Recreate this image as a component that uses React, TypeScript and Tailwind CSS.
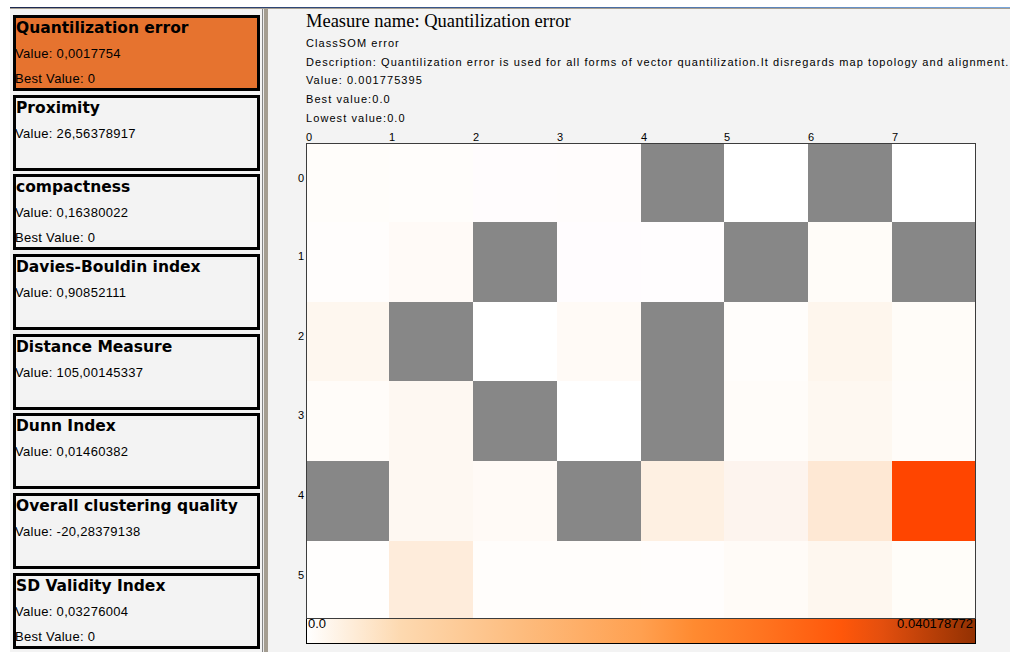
import React from 'react';

type Card = { title: string; value: string; best?: boolean; active?: boolean };

const cards: Card[] = [
  { title: 'Quantilization error', value: '0,0017754', best: true, active: true },
  { title: 'Proximity', value: '26,56378917' },
  { title: 'compactness', value: '0,16380022', best: true },
  { title: 'Davies-Bouldin index', value: '0,90852111' },
  { title: 'Distance Measure', value: '105,00145337' },
  { title: 'Dunn Index', value: '0,01460382' },
  { title: 'Overall clustering quality', value: '-20,28379138' },
  { title: 'SD Validity Index', value: '0,03276004', best: true },
];

const G = 'bg-[#878787]';
const cells: string[][] = [
  ['bg-[#fffdfa]', 'bg-[#fffdfb]', 'bg-[#fffcfd]', 'bg-[#fffcfc]', G, 'bg-[#ffffff]', G, 'bg-[#ffffff]'],
  ['bg-[#fffdfc]', 'bg-[#fffaf7]', G, 'bg-[#fffcfe]', 'bg-[#fffdfe]', G, 'bg-[#fffcf8]', G],
  ['bg-[#fef7ef]', G, 'bg-[#ffffff]', 'bg-[#fffaf6]', G, 'bg-[#fffdfb]', 'bg-[#fef6ed]', 'bg-[#fffcf8]'],
  ['bg-[#fffcf9]', 'bg-[#fef8f2]', G, 'bg-[#ffffff]', G, 'bg-[#fffcf9]', 'bg-[#fef8f1]', 'bg-[#fffcf9]'],
  [G, 'bg-[#fef8f2]', 'bg-[#fffaf6]', G, 'bg-[#fef0e2]', 'bg-[#fdf4ee]', 'bg-[#fee8d4]', 'bg-[#ff4500]'],
  ['bg-[#fffefd]', 'bg-[#feecdb]', 'bg-[#fffdfb]', 'bg-[#fffdfb]', 'bg-[#fffdfc]', 'bg-[#fffbf7]', 'bg-[#fef7ef]', 'bg-[#fffdf9]'],
];

function MeasureCard({ card }: { card: Card }) {
  return (
    <div
      className={
        card.active
          ? 'h-[76px] w-[247px] shrink-0 border-[3px] border-black bg-[#e6732f]'
          : 'h-[76px] w-[247px] shrink-0 border-[3px] border-black bg-[#f3f3f3]'
      }
    >
      <div className="h-full overflow-hidden pt-px text-black">
        <div className="whitespace-nowrap font-['DejaVu_Sans',sans-serif] text-[15.5px] font-bold leading-[18px]">
          {card.title}
        </div>
        <div className="-ml-px mt-[4px] whitespace-nowrap font-['Liberation_Sans',sans-serif] text-[13px] leading-[25px] tracking-[0.3px]">
          Value: {card.value}
        </div>
        {card.best && (
          <div className="-ml-px whitespace-nowrap font-['Liberation_Sans',sans-serif] text-[13px] leading-[25px] tracking-[0.3px]">
            Best Value: 0
          </div>
        )}
      </div>
    </div>
  );
}

export default function App() {
  const small = "font-['Liberation_Sans',sans-serif] text-[11px] leading-[18.7px] tracking-[1.07px] whitespace-nowrap";
  return (
    <div className="flex h-[660px] w-[1014px] flex-col overflow-hidden bg-white pb-[8px] pl-[10px] pr-[4px] pt-[7px]">
      <div className="h-px shrink-0 bg-[linear-gradient(to_right,#1b2850,#3d5f95_50%,#78a6dc)]" />
      <div className="h-px shrink-0 bg-[#a49d91]" />
      <div className="flex min-h-0 flex-1 bg-[#f3f3f3]">
        {/* left list */}
        <div className="flex w-[252px] shrink-0 flex-col gap-[3.7px] pl-[3px] pt-[6px]">
          {cards.map((c) => (
            <MeasureCard key={c.title} card={c} />
          ))}
        </div>
        {/* splitter */}
        <div className="flex w-[6px] shrink-0">
          <div className="w-px bg-[#858585]" />
          <div className="w-px bg-[#ececec]" />
          <div className="w-[4px] bg-[#a49d91]" />
        </div>
        {/* right panel */}
        <div className="flex min-w-0 flex-1 flex-col pl-[30px] text-black">
          <div className="ml-[8px] mt-px whitespace-nowrap font-['Liberation_Serif',serif] text-[18.5px] leading-[22px]">
            Measure name: Quantilization error
          </div>
          <div className="ml-[8px] mt-[2px] flex flex-col">
            <div className={small}>ClassSOM error</div>
            <div className={small}>
              Description: Quantilization error is used for all forms of vector quantilization.It disregards map topology and alignment.
            </div>
            <div className={small}>Value: 0.001775395</div>
            <div className={small}>Best value:0.0</div>
            <div className={small}>Lowest value:0.0</div>
          </div>
          {/* column labels */}
          <div className="ml-[8px] mt-[3.5px] grid w-[670px] grid-cols-[83px_84px_84px_84px_83px_84px_84px_84px] font-['Liberation_Sans',sans-serif] text-[11px] leading-[12px]">
            {[0, 1, 2, 3, 4, 5, 6, 7].map((i) => (
              <div key={i}>{i}</div>
            ))}
          </div>
          {/* grid with row labels */}
          <div className="flex">
            <div className="grid w-[8px] grid-rows-[78px_80px_79px_80px_80px_77px] pt-px font-['Liberation_Sans',sans-serif] text-[11px] leading-[11px]">
              {[0, 1, 2, 3, 4, 5].map((i) => (
                <div key={i} className="pr-[2px] pt-[29px] text-right">
                  {i}
                </div>
              ))}
            </div>
            <div className="grid w-[670px] grid-cols-[82px_84px_84px_84px_83px_84px_84px_83px] grid-rows-[78px_80px_79px_80px_80px_77px] border border-[#3c3c3c]">
              {cells.map((row, r) =>
                row.map((cls, c) => <div key={`${r}-${c}`} className={cls} />)
              )}
            </div>
          </div>
          {/* legend */}
          <div className="ml-[8px] flex h-[25px] w-[670px] items-start justify-between overflow-hidden border-x border-b border-black bg-[linear-gradient(to_right,#ffffff_0%,#fdd9b0_14%,#fdbc7e_32%,#ffa050_50%,#ff8a30_58%,#ff7420_68%,#ff570a_80%,#e44f0e_86%,#933102_100%)] font-['Liberation_Sans',sans-serif] text-[13px] leading-[13px] text-black">
            <span className="-mt-[2px] pl-px">0.0</span>
            <span className="-mt-[2px] pr-[2px]">0.040178772</span>
          </div>
        </div>
      </div>
    </div>
  );
}
